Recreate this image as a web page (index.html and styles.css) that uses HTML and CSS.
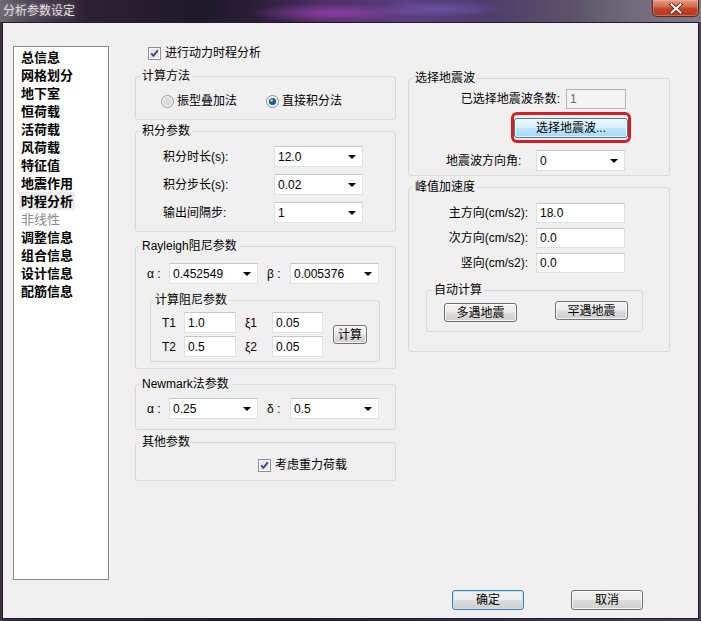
FILE: index.html
```html
<!DOCTYPE html>
<html lang="zh-CN">
<head>
<meta charset="utf-8">
<title>分析参数设定</title>
<link rel="stylesheet" href="styles.css">
</head>
<body>
<div class="window">
  <div class="titlebar">
    <span class="title">分析参数设定</span>
    <div class="close">
      <svg width="14" height="11" viewBox="0 0 14 11"><path d="M2.5 1.5 L11.5 9.5 M11.5 1.5 L2.5 9.5" stroke="#5a1a10" stroke-width="3.6" stroke-linecap="square"/><path d="M2.5 1.5 L11.5 9.5 M11.5 1.5 L2.5 9.5" stroke="#fff" stroke-width="2" stroke-linecap="square"/></svg>
    </div>
  </div>
  <div class="client">
    <div class="main">
      <ul class="nav">
        <li><span>总信息</span></li>
        <li><span>网格划分</span></li>
        <li><span>地下室</span></li>
        <li><span>恒荷载</span></li>
        <li><span>活荷载</span></li>
        <li><span>风荷载</span></li>
        <li><span>特征值</span></li>
        <li><span>地震作用</span></li>
        <li class="sel"><span>时程分析</span></li>
        <li class="dis"><span>非线性</span></li>
        <li><span>调整信息</span></li>
        <li><span>组合信息</span></li>
        <li><span>设计信息</span></li>
        <li><span>配筋信息</span></li>
      </ul>

      <div class="col mid">
        <div class="chk-row top-chk">
          <span class="cb"><svg width="13" height="13" viewBox="0 0 13 13"><rect x="0.5" y="0.5" width="12" height="12" fill="#fff" stroke="#8e8f8f"/><rect x="2" y="2" width="9" height="9" fill="#e4e6ea"/><path d="M3.3 6.4 L5.4 8.8 L9.8 3.4" fill="none" stroke="#2f4680" stroke-width="1.8"/></svg></span>
          <span>进行动力时程分析</span>
        </div>

        <fieldset class="grp g-method">
          <legend>计算方法</legend>
          <div class="radio-row">
            <span class="radio-item"><svg width="13" height="13" viewBox="0 0 13 13"><circle cx="6.5" cy="6.5" r="6" fill="#f1f1f1" stroke="#9a9a9a"/><circle cx="6.5" cy="6.5" r="4.2" fill="#dcdcdc"/></svg><span>振型叠加法</span></span>
            <span class="radio-item"><svg width="13" height="13" viewBox="0 0 13 13"><circle cx="6.5" cy="6.5" r="6" fill="#f1f1f1" stroke="#8e8f8f"/><circle cx="6.5" cy="6.5" r="3.6" fill="#1e5a86"/><circle cx="5.6" cy="5.4" r="1.4" fill="#8fd3f2"/></svg><span>直接积分法</span></span>
          </div>
        </fieldset>

        <fieldset class="grp g-int">
          <legend>积分参数</legend>
          <div class="frows">
            <div class="frow"><span class="flabel">积分时长(s):</span><div class="combo w89"><span class="val">12.0</span><span class="arr"></span></div></div>
            <div class="frow"><span class="flabel">积分步长(s):</span><div class="combo w89"><span class="val">0.02</span><span class="arr"></span></div></div>
            <div class="frow"><span class="flabel">输出间隔步:</span><div class="combo w89"><span class="val">1</span><span class="arr"></span></div></div>
          </div>
        </fieldset>

        <fieldset class="grp g-ray">
          <legend>Rayleigh阻尼参数</legend>
          <div class="pair-row">
            <span class="glabel ga">α :</span><div class="combo w89"><span class="val">0.452549</span><span class="arr"></span></div>
            <span class="glabel gb">β :</span><div class="combo w89"><span class="val">0.005376</span><span class="arr"></span></div>
          </div>
          <fieldset class="grp g-calc">
            <legend>计算阻尼参数</legend>
            <div class="calc-grid">
              <span class="tlabel">T1</span><span class="edit">1.0</span><span class="xlabel">ξ1</span><span class="edit">0.05</span>
              <button class="btn calc-btn">计算</button>
              <span class="tlabel">T2</span><span class="edit">0.5</span><span class="xlabel">ξ2</span><span class="edit">0.05</span>
            </div>
          </fieldset>
        </fieldset>

        <fieldset class="grp g-new">
          <legend>Newmark法参数</legend>
          <div class="pair-row">
            <span class="glabel ga">α :</span><div class="combo w89"><span class="val">0.25</span><span class="arr"></span></div>
            <span class="glabel gb">δ :</span><div class="combo w89"><span class="val">0.5</span><span class="arr"></span></div>
          </div>
        </fieldset>

        <fieldset class="grp g-other">
          <legend>其他参数</legend>
          <div class="chk-row other-chk">
            <span class="cb"><svg width="13" height="13" viewBox="0 0 13 13"><rect x="0.5" y="0.5" width="12" height="12" fill="#fff" stroke="#8e8f8f"/><rect x="2" y="2" width="9" height="9" fill="#e4e6ea"/><path d="M3.3 6.4 L5.4 8.8 L9.8 3.4" fill="none" stroke="#2f4680" stroke-width="1.8"/></svg></span>
            <span>考虑重力荷载</span>
          </div>
        </fieldset>
      </div>

      <div class="col right">
        <fieldset class="grp g-wave">
          <legend>选择地震波</legend>
          <div class="rrow r-count"><span class="rlabel">已选择地震波条数:</span><span class="edit disabled w60">1</span></div>
          <div class="ring-row"><span class="ring"><button class="btn hot wave-btn">选择地震波...</button></span></div>
          <div class="r-angle"><span class="alabel">地震波方向角:</span><div class="combo w89"><span class="val">0</span><span class="arr"></span></div></div>
        </fieldset>

        <fieldset class="grp g-peak">
          <legend>峰值加速度</legend>
          <div class="peak-rows">
            <div class="rrow"><span class="plabel">主方向(cm/s2):</span><span class="edit w89">18.0</span></div>
            <div class="rrow"><span class="plabel">次方向(cm/s2):</span><span class="edit w89">0.0</span></div>
            <div class="rrow"><span class="plabel">竖向(cm/s2):</span><span class="edit w89">0.0</span></div>
          </div>
          <fieldset class="grp g-auto">
            <legend>自动计算</legend>
            <div class="auto-row">
              <button class="btn eq1">多遇地震</button>
              <button class="btn eq2">罕遇地震</button>
            </div>
          </fieldset>
        </fieldset>
      </div>
    </div>

    <div class="footer">
      <button class="btn default fbtn">确定</button>
      <button class="btn fbtn">取消</button>
    </div>
  </div>
</div>
</body>
</html>
```

FILE: styles.css
```css
* { box-sizing: border-box; }

html, body {
  margin: 0;
  padding: 0;
}

body {
  width: 701px;
  height: 621px;
  overflow: hidden;
  background: #2a2233;
  font-family: "Liberation Sans", "Noto Sans CJK SC", sans-serif;
  font-size: 12px;
  color: #000;
}

.window {
  width: 701px;
  height: 621px;
  display: flex;
  flex-direction: column;
  background: linear-gradient(90deg, #3c3444 0, #2a2232 40px, #231b2c 300px, #3a2e48 500px, #4a4254 701px);
}

/* ---------- buttons (base) ---------- */
.btn {
  margin: 0;
  padding: 0;
  height: 20px;
  font-family: "Liberation Sans", "Noto Sans CJK SC", sans-serif;
  font-size: 12px;
  line-height: 16px;
  color: #000;
  text-align: center;
  border: 1px solid #707070;
  border-radius: 3px;
  background: linear-gradient(#f2f2f2 0%, #ebebeb 48%, #dddddd 52%, #cfcfcf 100%);
  box-shadow: inset 0 0 0 1px rgba(255, 255, 255, 0.75);
}

.btn.hot {
  border-color: #3c7fb1;
  background: linear-gradient(#eaf6fd 0%, #d9f0fc 48%, #bee6fd 52%, #a7d9f5 100%);
}

.btn.default {
  border-color: #3c7fb1;
  box-shadow: inset 0 0 0 1px #bfe3f8;
}

/* ---------- title bar ---------- */
.titlebar {
  height: 22px;
  display: flex;
  align-items: flex-start;
  background:
    radial-gradient(ellipse 110px 13px at 330px 13px, rgba(180, 70, 200, 0.6), rgba(180, 70, 200, 0) 75%),
    radial-gradient(ellipse 90px 11px at 440px 9px, rgba(120, 100, 200, 0.55), rgba(120, 100, 200, 0) 75%),
    linear-gradient(90deg, #6e6872 0, #4f4554 30px, #2c2234 85px, #1f172a 200px, #2a1e38 255px, #4b2e63 320px, #5b3f80 410px, #4f3d6a 490px, #5c5268 570px, #716a7b 630px, #807a88 701px);
}

.title {
  margin: 2px 0 0 3px;
  line-height: 16px;
  font-size: 12px;
  color: #e2e0e4;
  font-family: "Noto Sans CJK SC", sans-serif;
  text-shadow: 0 0 5px rgba(255, 255, 255, 0.35);
}

.close {
  margin-left: auto;
  margin-right: 2px;
  width: 47px;
  height: 17px;
  display: flex;
  align-items: center;
  justify-content: center;
  border: 1px solid #5a2620;
  border-top: none;
  border-radius: 0 0 5px 5px;
  background: linear-gradient(#e39a86 0%, #d46a50 40%, #c0432a 55%, #b8361e 100%);
  box-shadow: inset 0 0 0 1px rgba(255, 200, 180, 0.35);
}

/* ---------- client area ---------- */
.client {
  margin: 0 2px 2px 2px;
  height: 597px;
  border: 1px solid #211b29;
  background: #f0f0f0;
}

.main {
  display: flex;
  align-items: flex-start;
  padding: 23px 0 0 10px;
}

/* nav list */
.nav {
  width: 96px;
  height: 534px;
  margin: 0 26px 0 0;
  padding: 1px 0 0 5px;
  list-style: none;
  border: 1px solid #828790;
  background: #fff;
}

.nav li {
  height: 18px;
  line-height: 18px;
  font-size: 13px;
  font-weight: bold;
  font-family: "Noto Sans CJK SC", sans-serif;
  color: #000;
}

.nav li span {
  display: inline-block;
  padding: 0 2px;
}

.nav li.sel span { background: #ececec; }

.nav li.dis {
  color: #8c8c8c;
  font-weight: normal;
}

/* columns */
.col {
  display: flex;
  flex-direction: column;
}

.mid {
  width: 261px;
  margin-right: 12px;
}

.right { width: 262px; }

/* group boxes */
.grp {
  margin: 0;
  padding: 0;
  min-width: 0;
  border: 1px solid #d5d9dd;
  border-radius: 3px;
}

.grp > legend {
  margin-left: 4px;
  padding: 0 2px;
  height: 14px;
  line-height: 14px;
  font-size: 12px;
}

/* checkboxes & radios */
.chk-row {
  display: flex;
  align-items: center;
  height: 14px;
  line-height: 14px;
  gap: 4px;
}

.cb { display: flex; width: 13px; height: 13px; }

.top-chk { margin-left: 13px; }

.g-method {
  margin-top: 9px;
  padding: 11px 0 11px 0;
}

.radio-row {
  display: flex;
  align-items: center;
  height: 14px;
  padding-left: 25px;
  gap: 29px;
}

.radio-item {
  display: flex;
  align-items: center;
  gap: 3px;
  line-height: 14px;
}

/* combos and edits */
.combo {
  display: flex;
  align-items: center;
  height: 21px;
  padding-left: 3px;
  background: #fff;
  border: 1px solid #dcdfe3;
  border-top-color: #c4c7cc;
}

.combo .val {
  flex: 1;
  line-height: 14px;
}

.combo .arr {
  width: 0;
  height: 0;
  margin-right: 6px;
  border-left: 4px solid transparent;
  border-right: 4px solid transparent;
  border-top: 4px solid #000;
}

.w89 { width: 89px; }
.w60 { width: 60px; }

.edit {
  display: flex;
  align-items: center;
  height: 21px;
  padding-left: 3px;
  line-height: 14px;
  background: #fff;
  border: 1px solid #dcdfe3;
  border-top-color: #c4c7cc;
}

.edit.disabled {
  height: 20px;
  background: #f4f4f4;
  border: 1px solid #adb2b5;
  color: #6d6d6d;
}

/* integration group */
.g-int {
  margin-top: 4px;
  padding: 8px 0 8px 0;
}

.frows {
  display: flex;
  flex-direction: column;
  gap: 7px;
}

.frow {
  display: flex;
  align-items: center;
  padding-left: 27px;
}

.flabel {
  width: 111px;
  line-height: 14px;
}

/* rayleigh / newmark */
.g-ray {
  margin-top: 7px;
  padding: 10px 0 6px 0;
}

.pair-row {
  display: flex;
  align-items: center;
  padding-left: 11px;
}

.glabel { line-height: 14px; }
.ga { width: 22px; }
.gb { width: 23px; margin-left: 9px; }

.g-calc {
  margin: 9px 0 0 14px;
  width: 230px;
  padding: 5px 0 4px 0;
}

.g-calc > legend { margin-left: 2px; }

.calc-grid {
  display: grid;
  grid-template-columns: 22px 52px 36px 51px 44px;
  row-gap: 3px;
  align-items: center;
  padding-left: 11px;
}

.calc-grid .edit { height: 21px; }

.tlabel { line-height: 14px; }

.xlabel {
  padding-left: 9px;
  line-height: 14px;
}

.btn.calc-btn {
  grid-column: 5;
  grid-row: 1 / span 2;
  margin-left: 10px;
  width: 34px;
  height: 19px;
}

.g-new {
  margin-top: 8px;
  padding: 7px 0 10px 0;
}

.g-other {
  margin-top: 5px;
  padding: 9px 0 8px 0;
}

.other-chk { padding-left: 122px; }

/* right column */
.g-wave {
  margin-top: 25px;
  padding: 4px 0 4px 0;
}

.rrow {
  display: flex;
  align-items: center;
  justify-content: flex-end;
}

.r-count { padding-right: 43px; }

.rlabel {
  margin-right: 6px;
  line-height: 14px;
}

.ring-row {
  display: flex;
  margin-top: 3px;
  padding-left: 102px;
}

.ring {
  display: flex;
  padding: 3px 0 2px 0;
  border: 3px solid #d21f26;
  border-radius: 6px;
}

.btn.wave-btn {
  width: 114px;
  height: 20px;
}

.r-angle {
  display: flex;
  align-items: center;
  margin-top: 7px;
  padding-left: 37px;
}

.alabel {
  width: 90px;
  line-height: 14px;
}

.g-peak {
  margin-top: 4px;
  padding: 9px 0 19px 0;
}

.peak-rows {
  display: flex;
  flex-direction: column;
  gap: 5px;
}

.peak-rows .rrow { padding-right: 44px; }

.peak-rows .edit { height: 20px; }

.plabel {
  margin-right: 8px;
  line-height: 14px;
}

.g-auto {
  margin: 10px 0 0 17px;
  width: 217px;
  padding: 4px 0 9px 0;
}

.g-auto > legend { margin-left: 5px; }

.auto-row {
  display: flex;
  align-items: flex-start;
  padding-left: 17px;
  gap: 38px;
}

.btn.eq1, .btn.eq2 {
  width: 73px;
  height: 19px;
}

.btn.eq1 { margin-top: 2px; }

/* footer */
.footer {
  display: flex;
  justify-content: flex-end;
  gap: 47px;
  margin-top: 10px;
  padding-right: 55px;
}

.btn.fbtn {
  width: 72px;
  height: 20px;
}
```
